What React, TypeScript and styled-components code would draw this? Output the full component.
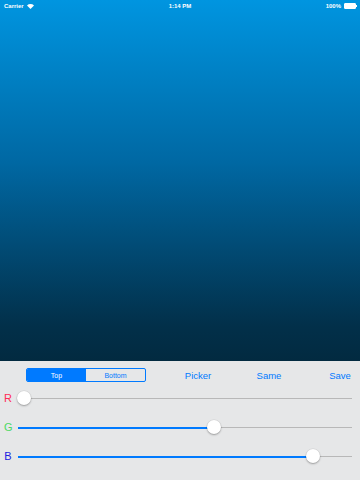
import React from 'react';
import styled, { createGlobalStyle } from 'styled-components';

const GlobalStyle = createGlobalStyle`
  html, body { margin: 0; padding: 0; }
  body {
    width: 360px;
    height: 480px;
    overflow: hidden;
    font-family: "Liberation Sans", Arial, sans-serif;
  }
`;

const Screen = styled.div`
  width: 360px;
  height: 480px;
  display: flex;
  flex-direction: column;
`;

const Preview = styled.div`
  flex: 0 0 361px;
  background: linear-gradient(to bottom, #0095e0 0%, #0068a3 45%, #02304a 90%, #022a40 100%);
  display: flex;
  flex-direction: column;
`;

const StatusBar = styled.div`
  height: 12px;
  display: grid;
  grid-template-columns: 1fr auto 1fr;
  align-items: center;
  padding: 0 4px;
  color: #fff;
  font-size: 6px;
  font-weight: bold;
`;

const Left = styled.div`
  display: flex;
  align-items: center;
  gap: 3px;
`;

const Right = styled.div`
  display: flex;
  align-items: center;
  justify-content: flex-end;
  gap: 3px;
`;

const Battery = styled.div`
  width: 10px;
  height: 4px;
  border: 0.5px solid #fff;
  border-radius: 1px;
  background: #fff;
  position: relative;
  &::after {
    content: '';
    position: absolute;
    right: -2px;
    top: 1px;
    width: 1px;
    height: 2px;
    background: #fff;
  }
`;

const Panel = styled.div`
  flex: 1;
  background: #e6e7e8;
  display: flex;
  flex-direction: column;
`;

const Toolbar = styled.div`
  height: 22px;
  margin-top: 3px;
  display: flex;
  align-items: center;
  gap: 31px;
  padding: 0 0 0 26px;
`;

const Segmented = styled.div`
  display: flex;
  width: 120px;
  height: 14px;
  border: 1px solid #007aff;
  border-radius: 2px;
  box-sizing: border-box;
  overflow: hidden;
  margin-right: 1px;
`;

const Segment = styled.div<{ $active?: boolean }>`
  flex: 1;
  display: flex;
  align-items: center;
  justify-content: center;
  font-size: 7px;
  color: ${p => (p.$active ? '#fff' : '#007aff')};
  background: ${p => (p.$active ? '#007aff' : 'transparent')};
`;

const TextButton = styled.div`
  width: 40px;
  color: #007aff;
  font-size: 9.5px;
  text-align: center;
`;

const Rows = styled.div`
  display: flex;
  flex-direction: column;
  margin-top: -2px;
  padding: 0 8px 0 4px;
`;

const Row = styled.div`
  height: 29px;
  display: flex;
  align-items: center;
  gap: 6px;
`;

const Label = styled.div<{ $color: string }>`
  width: 8px;
  font-size: 11px;
  color: ${p => p.$color};
  text-align: center;
  margin-bottom: 2px;
`;

const Track = styled.div`
  flex: 1;
  height: 1px;
  background: #b8b8b8;
  position: relative;
`;

const Fill = styled.div`
  position: absolute;
  left: 0;
  top: 0;
  height: 1.5px;
  background: #007aff;
`;

const Thumb = styled.div`
  position: absolute;
  top: 0;
  width: 14px;
  height: 14px;
  border-radius: 50%;
  background: #fff;
  box-shadow: 0 1px 2px rgba(0, 0, 0, 0.3), 0 0 0 0.5px rgba(0, 0, 0, 0.08);
  transform: translate(-50%, -50%);
`;

const sliders = [
  { label: 'R', color: '#ff2d55', value: 0.018 },
  { label: 'G', color: '#4cd964', value: 0.587 },
  { label: 'B', color: '#2020e0', value: 0.882 },
];

const Wifi = () => (
  <svg width="7" height="5" viewBox="0 0 14 10">
    <path d="M7 10 L0 3 A10 10 0 0 1 14 3 Z" fill="#fff" />
  </svg>
);

export default function App() {
  return (
    <Screen>
      <GlobalStyle />
      <Preview>
        <StatusBar>
          <Left>
            <span>Carrier</span>
            <Wifi />
          </Left>
          <span>1:14 PM</span>
          <Right>
            <span>100%</span>
            <Battery />
          </Right>
        </StatusBar>
      </Preview>
      <Panel>
        <Toolbar>
          <Segmented>
            <Segment $active>Top</Segment>
            <Segment>Bottom</Segment>
          </Segmented>
          <TextButton>Picker</TextButton>
          <TextButton>Same</TextButton>
          <TextButton>Save</TextButton>
        </Toolbar>
        <Rows>
          {sliders.map(s => (
            <Row key={s.label}>
              <Label $color={s.color}>{s.label}</Label>
              <Track>
                <Fill style={{ width: `${s.value * 100}%` }} />
                <Thumb style={{ left: `${s.value * 100}%` }} />
              </Track>
            </Row>
          ))}
        </Rows>
      </Panel>
    </Screen>
  );
}
